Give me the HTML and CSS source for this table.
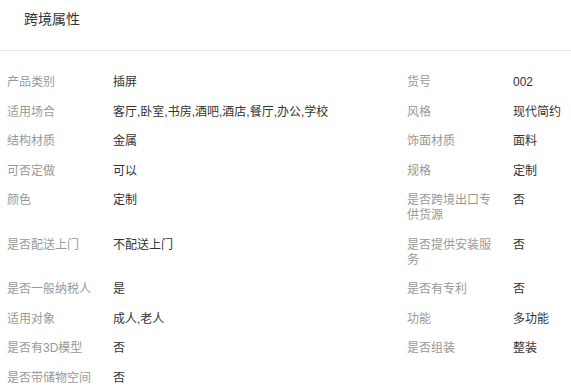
FILE: index.html
```html
<!DOCTYPE html>
<html lang="zh-CN">
<head>
    <meta charset="UTF-8">
    <title>跨境属性</title>
    <link rel="stylesheet" href="styles.css">
</head>
<body>

<div class="panel-head">
    <h2>跨境属性</h2>
</div>

<div class="attr-list">
    <div class="attr-row"><span class="attr-name">产品类别</span><span class="attr-value">插屏</span></div>
    <div class="attr-row"><span class="attr-name">货号</span><span class="attr-value">002</span></div>

    <div class="attr-row"><span class="attr-name">适用场合</span><span class="attr-value">客厅,卧室,书房,酒吧,酒店,餐厅,办公,学校</span></div>
    <div class="attr-row"><span class="attr-name">风格</span><span class="attr-value">现代简约</span></div>

    <div class="attr-row"><span class="attr-name">结构材质</span><span class="attr-value">金属</span></div>
    <div class="attr-row"><span class="attr-name">饰面材质</span><span class="attr-value">面料</span></div>

    <div class="attr-row"><span class="attr-name">可否定做</span><span class="attr-value">可以</span></div>
    <div class="attr-row"><span class="attr-name">规格</span><span class="attr-value">定制</span></div>

    <div class="attr-row"><span class="attr-name">颜色</span><span class="attr-value">定制</span></div>
    <div class="attr-row"><span class="attr-name">是否跨境出口专供货源</span><span class="attr-value">否</span></div>

    <div class="attr-row"><span class="attr-name">是否配送上门</span><span class="attr-value">不配送上门</span></div>
    <div class="attr-row"><span class="attr-name">是否提供安装服务</span><span class="attr-value">否</span></div>

    <div class="attr-row"><span class="attr-name">是否一般纳税人</span><span class="attr-value">是</span></div>
    <div class="attr-row"><span class="attr-name">是否有专利</span><span class="attr-value">否</span></div>

    <div class="attr-row"><span class="attr-name">适用对象</span><span class="attr-value">成人,老人</span></div>
    <div class="attr-row"><span class="attr-name">功能</span><span class="attr-value">多功能</span></div>

    <div class="attr-row"><span class="attr-name">是否有3D模型</span><span class="attr-value">否</span></div>
    <div class="attr-row"><span class="attr-name">是否组装</span><span class="attr-value">整装</span></div>

    <div class="attr-row"><span class="attr-name">是否带储物空间</span><span class="attr-value">否</span></div>
</div>

</body>
</html>
```

FILE: styles.css
```css
body {
    margin: 0;
    background: #fff;
    font-family: "Liberation Sans", "Noto Sans CJK SC", sans-serif;
    color: #333;
    overflow: hidden;
}

.panel-head {
    height: 51px;
    box-sizing: border-box;
    padding: 11px 24px 0;
    border-bottom: 1px solid #e8e8e8;
}

.panel-head h2 {
    margin: 0;
    font-size: 14px;
    font-weight: normal;
    line-height: 16px;
    color: #333;
}

.attr-list {
    display: grid;
    grid-template-columns: 400px 1fr;
    padding: 17px 0 0 7px;
    font-size: 12px;
    line-height: 15px;
}

.attr-row {
    display: flex;
    padding: 7px 0 7.5px;
}

.attr-name {
    flex: 0 0 90px;
    margin-right: 16px;
    color: #999;
}

.attr-value {
    color: #333;
}
```
